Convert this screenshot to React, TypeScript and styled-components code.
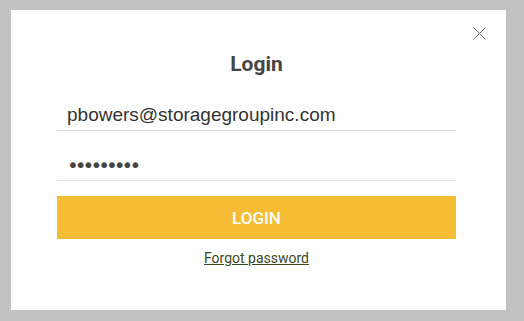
import React from "react";
import styled, { createGlobalStyle } from "styled-components";

const Global = createGlobalStyle`
  html, body { margin: 0; padding: 0; background: #c2c2c2; }
  body { font-family: Roboto, "Liberation Sans", sans-serif; }
`;

const Backdrop = styled.div`
  width: 524px;
  height: 321px;
  background: #c2c2c2;
  padding: 10px 18px 11px 11px;
  box-sizing: border-box;
`;

const Modal = styled.div`
  position: relative;
  width: 495px;
  height: 300px;
  background: #ffffff;
  box-sizing: border-box;
  padding: 40px 50px 0 46px;
  display: flex;
  flex-direction: column;
`;

const CloseButton = styled.button`
  position: absolute;
  top: 16px;
  right: 19px;
  width: 15px;
  height: 15px;
  padding: 0;
  border: 0;
  background: transparent;
  display: flex;
  align-items: center;
  justify-content: center;
  cursor: pointer;
`;

const Title = styled.h1`
  margin: 0;
  text-align: center;
  font-family: Roboto, sans-serif;
  font-weight: 700;
  font-size: 21px;
  line-height: 28px;
  color: #444444;
`;

const Field = styled.input<{ $gap: number }>`
  display: block;
  width: 100%;
  box-sizing: border-box;
  border: 0;
  border-bottom: 1px solid #dedede;
  outline: none;
  background: transparent;
  font-family: "Liberation Sans", Arial, sans-serif;
  font-size: 19px;
  color: #333333;
  padding: 6px 10px 0;
  height: 38px;
  margin-top: ${(p) => p.$gap}px;
`;

const PasswordField = styled(Field)`
  font-family: "DejaVu Sans", sans-serif;
  font-size: 20px;
  letter-spacing: -4px;
  color: #444;
`;

const LoginButton = styled.button`
  margin-top: 15px;
  height: 43px;
  width: 100%;
  border: 0;
  background: #f6bc34;
  color: #ffffff;
  font-family: Roboto, sans-serif;
  font-weight: 500;
  font-size: 17px;
  text-transform: uppercase;
  cursor: pointer;
`;

const Forgot = styled.a`
  align-self: center;
  margin-top: 11px;
  font-family: Roboto, sans-serif;
  font-size: 14px;
  color: #3b4a1c;
  text-decoration: underline;
  cursor: pointer;
`;

export default function App() {
  return (
    <>
      <Global />
      <Backdrop>
        <Modal>
          <CloseButton aria-label="Close">
            <svg width="13" height="13" viewBox="0 0 13 13">
              <path d="M0.5 0.5 L12.5 12.5 M12.5 0.5 L0.5 12.5" stroke="#666" strokeWidth="1" fill="none" />
            </svg>
          </CloseButton>
          <Title>Login</Title>
          <Field $gap={15} type="email" defaultValue="pbowers@storagegroupinc.com" readOnly />
          <PasswordField $gap={12} type="password" defaultValue="password1" readOnly />
          <LoginButton>Login</LoginButton>
          <Forgot>Forgot password</Forgot>
        </Modal>
      </Backdrop>
    </>
  );
}
